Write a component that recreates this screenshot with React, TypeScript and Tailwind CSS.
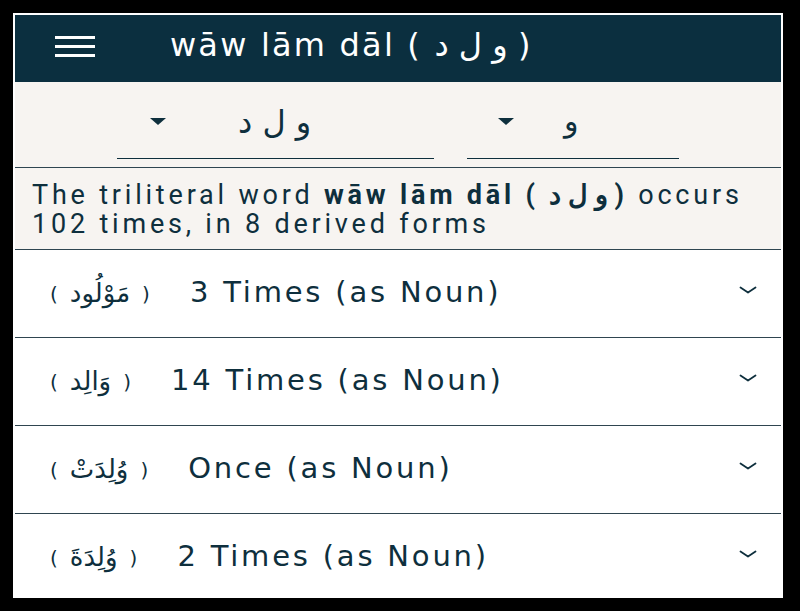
import React from 'react';

const rows = [
  { ar: 'مَوْلُود', label: '3 Times (as Noun)' },
  { ar: 'وَالِد', label: '14 Times (as Noun)' },
  { ar: 'وُلِدَتْ', label: 'Once (as Noun)' },
  { ar: 'وُلِدَةَ', label: '2 Times (as Noun)' },
];

function Caret() {
  return (
    <svg width="16" height="7" viewBox="0 0 16 7" className="shrink-0">
      <path d="M0 0 L16 0 L8 7 Z" fill="#0e2f3d" />
    </svg>
  );
}

function Chevron() {
  return (
    <svg width="18" height="8" viewBox="0 0 18 8" className="shrink-0">
      <path d="M1.5 1.5 L9 6.5 L16.5 1.5" fill="none" stroke="#0e2f3d" strokeWidth="1.8" strokeLinecap="round" strokeLinejoin="round" />
    </svg>
  );
}

export default function App() {
  return (
    <div className="w-[800px] h-[611px] bg-black pt-[13px] pl-[13px] overflow-hidden">
      <div className="w-[770px] h-[585px] border-2 border-white bg-white overflow-hidden flex flex-col">
        {/* top bar */}
        <div className="h-[67px] shrink-0 bg-[#0b2f3f] flex items-center pl-[40px]">
          <div className="flex flex-col gap-[6px] w-[40px] mb-[4px]">
            <div className="h-[3px] bg-white" />
            <div className="h-[3px] bg-white" />
            <div className="h-[3px] bg-white" />
          </div>
          <div className="ml-[75px] text-white text-[32px] tracking-[2.2px] font-['DejaVu_Sans',sans-serif] leading-none pb-[8px] whitespace-nowrap">
            wāw lām dāl ( و ل د )
          </div>
        </div>

        {/* filters */}
        <div className="h-[86px] shrink-0 bg-[#f7f4f1] border-b border-[#2f4550] flex items-start pl-[102px] pt-[24px] gap-[33px]">
          <div className="w-[317px] h-[53px] border-b border-[#0e2f3d] flex items-start">
            <div className="ml-[33px] mt-[12px]"><Caret /></div>
            <div dir="rtl" className="ml-[72px] text-[32px] tracking-[2px] leading-none text-[#0e2f3d] font-['DejaVu_Sans',sans-serif]">و ل د</div>
          </div>
          <div className="w-[212px] h-[53px] border-b border-[#0e2f3d] flex items-start">
            <div className="ml-[31px] mt-[12px]"><Caret /></div>
            <div dir="rtl" className="ml-[50px] text-[30px] leading-none text-[#0e2f3d] font-['DejaVu_Sans',sans-serif]">و</div>
          </div>
        </div>

        {/* description */}
        <div className="h-[82px] shrink-0 bg-[#f7f4f1] border-b border-[#2f4550] pl-[17px] pt-[13px] text-[27px] leading-[29px] tracking-[3.8px] text-[#0e2f3d] font-['Roboto',sans-serif] whitespace-nowrap">
          The triliteral word <b>wāw lām dāl ( و ل د )</b> occurs
          <br />
          102 times, in 8 derived forms
        </div>

        {/* forms */}
        {rows.map((r) => (
          <div key={r.label} className="h-[88px] shrink-0 border-b border-[#2f4550] flex items-center pl-[35px] pr-[24px] text-[#0e2f3d]">
            <div className="flex items-center gap-[12px] text-[26px] font-['DejaVu_Sans',sans-serif]">
              <span className="text-[20px]">(</span>
              <span dir="rtl">{r.ar}</span>
              <span className="text-[20px]">)</span>
            </div>
            <div className="ml-[40px] text-[29px] tracking-[2.8px] font-['DejaVu_Sans',sans-serif] leading-none pb-[2px] whitespace-nowrap">
              {r.label}
            </div>
            <div className="ml-auto mb-[8px]"><Chevron /></div>
          </div>
        ))}
      </div>
    </div>
  );
}
